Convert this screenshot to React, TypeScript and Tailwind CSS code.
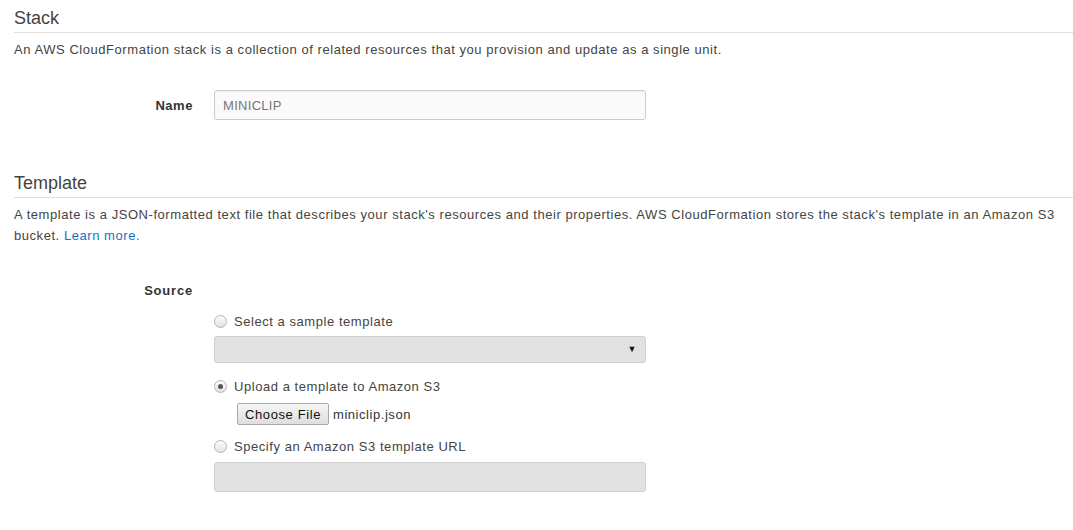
import React from "react";

function Radio({ checked = false }: { checked?: boolean }) {
  return (
    <span className="w-[13px] h-[13px] rounded-full border border-[#b5b5b5] bg-gradient-to-b from-[#fdfdfd] to-[#e2e2e2] flex items-center justify-center shrink-0">
      {checked && <span className="w-[5px] h-[5px] rounded-full bg-[#555]" />}
    </span>
  );
}

function Heading({ title, className = "" }: { title: string; className?: string }) {
  return (
    <h2
      className={`text-[18px] leading-[22px] tracking-normal pt-[7px] pb-[3px] border-b border-[#dedede] text-[#444] ${className}`}
    >
      {title}
    </h2>
  );
}

export default function App() {
  return (
    <div className="bg-white min-h-[530px] pl-[14px] font-['Liberation_Sans',Arial,sans-serif] text-[13px] leading-[21px] tracking-[0.55px] text-[#444]">
      {/* Stack */}
      <Heading title="Stack" />
      <p className="mt-[6px]">
        An AWS CloudFormation stack is a collection of related resources that you provision and update as a single unit.
      </p>

      <div className="flex items-center mt-[30px]">
        <label className="w-[179px] text-right font-bold text-[#333]">Name</label>
        <div className="ml-[21px] w-[432px] h-[30px] border border-[#cccccc] rounded-[3px] bg-[#fafafa] shadow-[inset_0_1px_1px_rgba(0,0,0,0.05)] flex items-center pl-[8px] text-[#777] tracking-[0.3px]">
          MINICLIP
        </div>
      </div>

      {/* Template */}
      <Heading title="Template" className="mt-[45px]" />
      <p className="mt-[6px] pr-[4px]">
        A template is a JSON-formatted text file that describes your stack's resources and their properties. AWS CloudFormation stores the stack's template in an Amazon S3 bucket.{" "}
        <a href="#" className="text-[#1a6fc0]">Learn more.</a>
      </p>

      <div className="flex mt-[34px]">
        <label className="w-[179px] text-right font-bold text-[#333] tracking-[0.8px]">Source</label>
      </div>

      <div className="pl-[200px] mt-[10px]">
        <div className="flex items-center h-[21px]">
          <Radio />
          <span className="ml-[7px]">Select a sample template</span>
        </div>
        <div className="mt-[4px] w-[432px] h-[27px] border border-[#cfcfcf] rounded-[3px] bg-[#e1e1e1] flex items-center justify-end pr-[8px]">
          <span className="text-[9px] text-[#111] leading-none">▼</span>
        </div>

        <div className="flex items-center h-[21px] mt-[13px]">
          <Radio checked />
          <span className="ml-[7px]">Upload a template to Amazon S3</span>
        </div>
        <div className="flex items-center mt-[6px] ml-[23px]">
          <button className="w-[92px] h-[22px] border border-[#a9a9a9] rounded-[2px] bg-gradient-to-b from-[#f6f6f6] to-[#dedede] text-[13px] tracking-[0.6px] text-[#111] leading-none">
            Choose File
          </button>
          <span className="ml-[4px] text-[#333]">miniclip.json</span>
        </div>

        <div className="flex items-center h-[21px] mt-[11px]">
          <Radio />
          <span className="ml-[7px]">Specify an Amazon S3 template URL</span>
        </div>
        <div className="mt-[5px] w-[432px] h-[30px] border border-[#cfcfcf] rounded-[3px] bg-[#e1e1e1]" />
      </div>
    </div>
  );
}
